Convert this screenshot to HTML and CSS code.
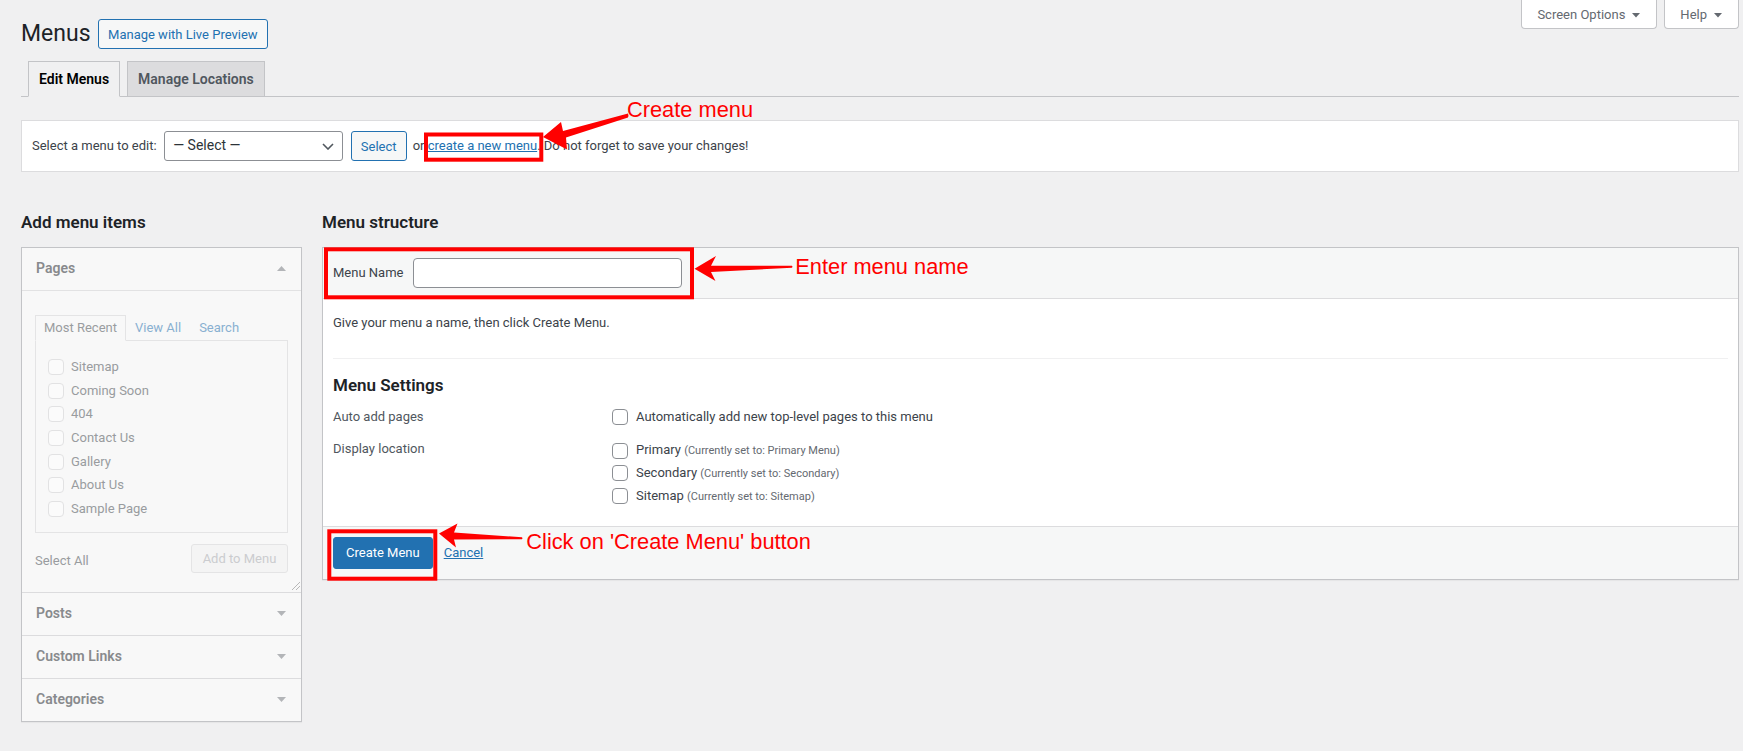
FILE: index.html
```html
<!DOCTYPE html>
<html lang="en">
<head>
<meta charset="utf-8">
<title>Menus</title>
<link rel="stylesheet" href="styles.css">
</head>
<body>
<div class="wrap">
  <div class="top">
    <div class="title-row">
      <h1 class="page-title">Menus</h1>
      <a class="btn-outline" href="#">Manage with Live Preview</a>
    </div>
    <div class="screen-links">
      <button class="meta-link">Screen Options <svg class="tri" width="8" height="5" viewBox="0 0 8 5"><polygon points="0,0 8,0 4,4.6"/></svg></button>
      <button class="meta-link">Help <svg class="tri" width="8" height="5" viewBox="0 0 8 5"><polygon points="0,0 8,0 4,4.6"/></svg></button>
    </div>
  </div>

  <nav class="nav-tabs">
    <a class="nav-tab active" href="#">Edit Menus</a>
    <a class="nav-tab" href="#">Manage Locations</a>
  </nav>

  <div class="manage-menus">
    <span class="manage-label">Select a menu to edit:</span>
    <div class="select-box"><span>— Select —</span><svg width="12" height="7" viewBox="0 0 12 7"><path d="M1 1l5 5 5-5" fill="none" stroke="#50575e" stroke-width="1.6"/></svg></div>
    <button class="btn-outline select-btn">Select</button>
    <span class="manage-text">or <a class="link" href="#">create a new menu</a>. Do not forget to save your changes!</span>
  </div>

  <div class="columns">
    <div class="col-left">
      <h2 class="col-title">Add menu items</h2>
      <div class="accordion">
        <div class="acc-section open">
          <div class="acc-title"><span>Pages</span><svg class="acc-arrow" width="9" height="5" viewBox="0 0 9 5"><polygon points="0,5 4.5,0 9,5"/></svg></div>
          <div class="acc-content">
            <ul class="mini-tabs">
              <li class="active">Most Recent</li>
              <li class="tab-link">View All</li>
              <li class="tab-link">Search</li>
            </ul>
            <div class="tab-panel">
              <ul class="check-list">
                <li><span class="cb-faded"></span>Sitemap</li>
                <li><span class="cb-faded"></span>Coming Soon</li>
                <li><span class="cb-faded"></span>404</li>
                <li><span class="cb-faded"></span>Contact Us</li>
                <li><span class="cb-faded"></span>Gallery</li>
                <li><span class="cb-faded"></span>About Us</li>
                <li><span class="cb-faded"></span>Sample Page</li>
              </ul>
            </div>
            <div class="button-controls">
              <span class="select-all">Select All</span>
              <button class="btn-disabled">Add to Menu</button>
            </div>
            <svg class="grip" width="9" height="9" viewBox="0 0 9 9"><path d="M9 1L1 9M9 5L5 9" stroke="#b8b8b8" stroke-width="1"/></svg>
          </div>
        </div>
        <div class="acc-section">
          <div class="acc-title"><span>Posts</span><svg class="acc-arrow" width="9" height="5" viewBox="0 0 9 5"><polygon points="0,0 9,0 4.5,5"/></svg></div>
        </div>
        <div class="acc-section">
          <div class="acc-title"><span>Custom Links</span><svg class="acc-arrow" width="9" height="5" viewBox="0 0 9 5"><polygon points="0,0 9,0 4.5,5"/></svg></div>
        </div>
        <div class="acc-section last">
          <div class="acc-title"><span>Categories</span><svg class="acc-arrow" width="9" height="5" viewBox="0 0 9 5"><polygon points="0,0 9,0 4.5,5"/></svg></div>
        </div>
      </div>
    </div>

    <div class="col-right">
      <h2 class="col-title">Menu structure</h2>
      <div class="menu-edit">
        <div class="menu-header">
          <label class="menu-name-label" for="menu-name">Menu Name</label>
          <input id="menu-name" class="menu-name" type="text">
        </div>
        <div class="menu-body">
          <p class="intro">Give your menu a name, then click Create Menu.</p>
          <div class="divider"></div>
          <h3 class="settings-title">Menu Settings</h3>
          <div class="settings">
            <div class="set-label first">Auto add pages</div>
            <div class="set-value first"><span class="cb"></span><span>Automatically add new top-level pages to this menu</span></div>
            <div class="set-label second">Display location</div>
            <ul class="set-value locations">
              <li><span class="cb"></span><span>Primary <span class="loc-note">(Currently set to: Primary Menu)</span></span></li>
              <li><span class="cb"></span><span>Secondary <span class="loc-note">(Currently set to: Secondary)</span></span></li>
              <li><span class="cb"></span><span>Sitemap <span class="loc-note">(Currently set to: Sitemap)</span></span></li>
            </ul>
          </div>
        </div>
        <div class="menu-footer">
          <button class="btn-primary">Create Menu</button>
          <a class="link cancel" href="#">Cancel</a>
        </div>
      </div>
    </div>
  </div>
</div>

<div class="annotations">
  <svg class="annot-svg" width="1743" height="751" viewBox="0 0 1743 751">
    <g fill="none" stroke="#ff0000" stroke-width="4">
      <rect x="426" y="134.5" width="115.3" height="25.2"/>
      <rect x="326" y="249.3" width="366" height="48"/>
      <rect x="329.3" y="531.3" width="106" height="47.4"/>
    </g>
    <g fill="#ff0000">
      <polygon points="543,137 561,122 563,131 628,113.5 628.5,115.8 628,117.5 566,137.5 567,149.5"/>
      <polygon points="694.5,268.8 716,256 711,265.8 792,265.8 792.5,266.8 792,267.8 711,272 715.5,281"/>
      <polygon points="439,533.5 457.5,523.5 454,532.5 522,537.3 522.5,538.3 522,539.3 454,539.5 456,547.5"/>
    </g>
  </svg>
  <div class="annot-text t1">Create menu</div>
  <div class="annot-text t2">Enter menu name</div>
  <div class="annot-text t3">Click on 'Create Menu' button</div>
</div>
</body>
</html>
```
FILE: styles.css
```css
html, body {
  margin: 0;
  padding: 0;
}
body {
  background: #f0f0f1;
  font-family: Roboto, "Liberation Sans", sans-serif;
  font-size: 13px;
  line-height: 1.4;
  color: #3c434a;
  position: relative;
  min-height: 751px;
}
.wrap {
  padding: 0 4px 0 21px;
}
button {
  font-family: inherit;
  font-size: 13px;
  cursor: pointer;
}
.link {
  color: #2271b1;
  text-decoration: underline;
}

/* header */
.top {
  display: flex;
  justify-content: space-between;
  align-items: flex-start;
}
.title-row {
  display: flex;
  align-items: center;
  margin-top: 19px;
  height: 30px;
}
.page-title {
  margin: 0 7px 0 0;
  font-size: 23px;
  font-weight: 400;
  line-height: 30px;
  color: #1d2327;
}
.btn-outline {
  display: inline-flex;
  align-items: center;
  box-sizing: border-box;
  height: 30px;
  padding: 0 9.5px;
  border: 1px solid #2271b1;
  border-radius: 3px;
  background: #f6f7f7;
  color: #2271b1;
  font-size: 13px;
  text-decoration: none;
  line-height: 1;
}
.screen-links {
  display: flex;
  gap: 7px;
}
.meta-link {
  display: flex;
  align-items: center;
  gap: 7px;
  box-sizing: border-box;
  height: 29px;
  padding: 1px 16px 0 15px;
  background: #fff;
  border: 1px solid #c3c4c7;
  border-top: none;
  border-radius: 0 0 4px 4px;
  color: #646970;
  line-height: 22px;
}
.meta-link .tri {
  fill: #646970;
  margin-top: 1px;
}

/* tabs */
.nav-tabs {
  display: flex;
  gap: 7px;
  margin-top: 12px;
  padding-left: 7px;
  border-bottom: 1px solid #c3c4c7;
}
.nav-tab {
  display: block;
  padding: 5px 10px;
  margin-bottom: -1px;
  line-height: 24px;
  font-size: 14px;
  font-weight: 600;
  border: 1px solid #c3c4c7;
  background: #dcdcde;
  color: #50575e;
  text-decoration: none;
}
.nav-tab.active {
  background: #f0f0f1;
  color: #000;
  border-bottom-color: #f0f0f1;
}

/* manage menus bar */
.manage-menus {
  margin-top: 23px;
  display: flex;
  align-items: center;
  height: 30px;
  padding: 10px 10px;
  background: #fff;
  border: 1px solid #dcdcde;
}
.manage-label {
  margin-right: 7.5px;
  color: #3c434a;
}
.select-box {
  box-sizing: border-box;
  width: 179px;
  height: 30px;
  display: flex;
  align-items: center;
  justify-content: space-between;
  padding: 0 8px 0 8px;
  border: 1px solid #8c8f94;
  border-radius: 3px;
  background: #fff;
  color: #2c3338;
  font-size: 14px;
}
.select-btn {
  margin-left: 7.5px;
  justify-content: center;
  width: 56px;
  padding: 0;
}
.manage-text {
  margin-left: 6px;
  color: #3c434a;
}

/* columns */
.columns {
  display: flex;
  align-items: flex-start;
  gap: 20px;
  margin-top: 39px;
}
.col-left {
  width: 281px;
  flex: none;
}
.col-right {
  flex: 1;
  min-width: 0;
}
.col-title {
  margin: 0 0 13px;
  font-size: 17px;
  font-weight: 600;
  line-height: 23px;
  color: #1d2327;
}

/* left accordion (disabled look) */
.accordion {
  border: 1px solid #c3c4c7;
  box-shadow: 0 1px 1px rgba(0, 0, 0, .04);
  background: #f8f8f8;
}
.acc-section {
  border-bottom: 1px solid #dcdcde;
}
.acc-section.last {
  border-bottom: none;
}
.acc-title {
  display: flex;
  justify-content: space-between;
  align-items: center;
  padding: 10px 15px 11px 14px;
  line-height: 21px;
  font-size: 14px;
  font-weight: 600;
  color: #888a8d;
}
.acc-arrow {
  fill: #b3b5b8;
}
.open .acc-title {
  border-bottom: 1px solid #e2e2e3;
}
.acc-content {
  position: relative;
  padding: 23.7px 13px 19px;
}
.mini-tabs {
  display: flex;
  margin: 0;
  padding: 0;
  list-style: none;
}
.mini-tabs li {
  padding: 0 8px;
  line-height: 24px;
  border: 1px solid transparent;
  margin-bottom: -1px;
  color: #89b0d1;
}
.mini-tabs li.active {
  border-color: #e4e4e5;
  border-bottom-color: #f8f8f8;
  color: #9a9da0;
  position: relative;
}
.tab-panel {
  border: 1px solid #e4e4e5;
  padding: 14.5px 12px 10.9px;
}
.check-list {
  margin: 0;
  padding: 0;
  list-style: none;
}
.check-list li {
  display: flex;
  align-items: center;
  gap: 7px;
  height: 23.7px;
  color: #999c9f;
}
.cb-faded {
  width: 16px;
  height: 16px;
  box-sizing: border-box;
  border: 1px solid #e2e2e3;
  border-radius: 4px;
  background: #fbfbfb;
  flex: none;
}
.button-controls {
  display: flex;
  justify-content: space-between;
  align-items: center;
  margin-top: 11px;
}
.select-all {
  padding-top: 5px;
  color: #999c9f;
}
.btn-disabled {
  box-sizing: border-box;
  width: 97px;
  height: 29px;
  border: 1px solid #e4e4e5;
  border-radius: 3px;
  background: #f4f4f4;
  color: #cbcccf;
  padding: 0;
}
.grip {
  position: absolute;
  right: 1px;
  bottom: 2px;
}

/* right menu edit */
.menu-edit {
  border: 1px solid #c3c4c7;
  background: #fff;
  box-shadow: 0 1px 1px rgba(0, 0, 0, .04);
}
.menu-header {
  display: flex;
  align-items: center;
  padding: 10px;
  background: #f6f7f7;
  border-bottom: 1px solid #dcdcde;
}
.menu-name-label {
  margin-right: 10px;
  color: #3c434a;
}
.menu-name {
  box-sizing: border-box;
  width: 269px;
  height: 30px;
  margin: 0;
  padding: 0 8px;
  border: 1px solid #8c8f94;
  border-radius: 4px;
  background: #fff;
  font-family: inherit;
  font-size: 14px;
}
.menu-body {
  padding: 14px 10px 18.3px;
}
.intro {
  margin: 0;
  line-height: 19.5px;
}
.divider {
  height: 1px;
  background: #f0f0f1;
  margin-top: 25.3px;
}
.settings-title {
  margin: 15.5px 0 0;
  font-size: 17px;
  font-weight: 600;
  line-height: 23px;
  color: #1d2327;
}
.settings {
  display: grid;
  grid-template-columns: 279px 1fr;
  row-gap: 12.35px;
  margin-top: 9.6px;
}
.set-label {
  color: #50575e;
}
.set-label.first {
  line-height: 20px;
}
.set-label.second {
  line-height: 19px;
}
.set-value {
  display: flex;
  align-items: center;
  gap: 8px;
  height: 20px;
}
.locations {
  display: block;
  height: auto;
  margin: 0;
  padding: 0;
  list-style: none;
}
.locations li {
  display: flex;
  align-items: center;
  gap: 8px;
  height: 22.7px;
}
.cb {
  width: 16px;
  height: 16px;
  box-sizing: border-box;
  border: 1px solid #8c8f94;
  border-radius: 4px;
  background: #fff;
  flex: none;
}
.loc-note {
  font-size: 11px;
  color: #646970;
}
.menu-footer {
  display: flex;
  align-items: center;
  padding: 10px;
  background: #f6f7f7;
  border-top: 1px solid #dcdcde;
}
.btn-primary {
  height: 32px;
  padding: 0 12px;
  border: 1px solid #2271b1;
  border-radius: 3px;
  background: #2271b1;
  color: #fff;
}
.cancel {
  margin-left: 11px;
  line-height: 20px;
}

/* annotation overlay */
.annotations {
  position: absolute;
  left: 0;
  top: 0;
  width: 1743px;
  height: 751px;
  pointer-events: none;
}
.annot-svg {
  position: absolute;
  left: 0;
  top: 0;
}
.annot-text {
  position: absolute;
  font-family: "Liberation Sans", Arial, sans-serif;
  font-size: 21.8px;
  line-height: 22px;
  color: #ff0000;
  white-space: nowrap;
}
.t1 { left: 627px; top: 99.4px; }
.t2 { left: 795.3px; top: 256.4px; }
.t3 { left: 526.3px; top: 530.7px; }
```
